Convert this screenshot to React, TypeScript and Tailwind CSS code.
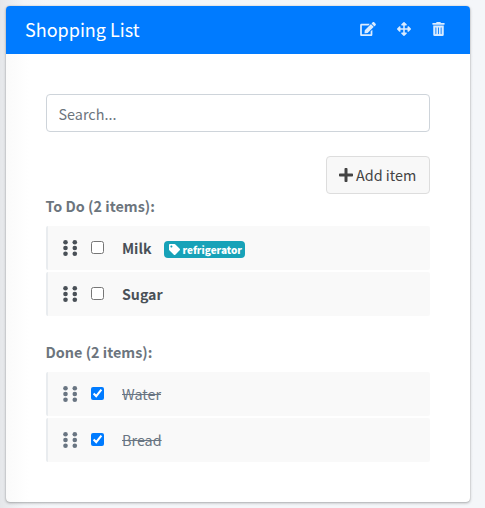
import { FaArrowsAlt, FaEdit, FaPlus, FaTag, FaTrashAlt } from "react-icons/fa";

type Item = { name: string; done?: boolean; tag?: string };

const todo: Item[] = [{ name: "Milk", tag: "refrigerator" }, { name: "Sugar" }];
const done: Item[] = [
  { name: "Water", done: true },
  { name: "Bread", done: true },
];

function DragHandle() {
  return (
    <svg viewBox="0 0 15 16" className="h-4 w-[15px] shrink-0" fill="currentColor">
      {[2.3, 8, 13.7].map((y) => (
        <g key={y}>
          <circle cx="2.5" cy={y} r="2.3" />
          <circle cx="11.8" cy={y} r="2.3" />
        </g>
      ))}
    </svg>
  );
}

function Row({ item }: { item: Item }) {
  return (
    <li
      className={`flex h-11 items-center rounded-[2px] border-l-2 border-[#e9ecef] bg-[#f9f9f9] pl-[15px] ${
        item.done ? "text-[#697582]" : "text-[#495057]"
      }`}
    >
      <DragHandle />
      <input
        type="checkbox"
        defaultChecked={item.done}
        className="mb-[2px] ml-[13px] h-[13px] w-[13px] shrink-0 accent-[#007bff]"
      />
      <span
        className={`ml-[18px] leading-6 ${
          item.done ? "text-[14.4px] font-normal line-through" : "text-[14.2px] font-bold"
        }`}
      >
        {item.name}
      </span>
      {item.tag && (
        <span className="ml-[13px] mt-[2px] flex h-[17px] w-[81px] items-center rounded bg-[#17a2b8] pl-[5px] text-[10px] font-black leading-none text-white">
          <FaTag className="mr-[2px] h-[11px] w-[11px] shrink-0" />
          <span className="mt-px">{item.tag}</span>
        </span>
      )}
    </li>
  );
}

function Section({ title, items }: { title: string; items: Item[] }) {
  return (
    <section>
      <h4 className="-ml-[0.5px] h-8 text-[14.4px] font-bold leading-[24px] text-[#6c757d]">{title}</h4>
      <ul className="flex flex-col gap-[2px]">
        {items.map((item) => (
          <Row key={item.name} item={item} />
        ))}
      </ul>
    </section>
  );
}

export default function App() {
  return (
    <div className="h-[508px] w-[485px] bg-[#f4f6f9] bg-linear-to-r from-[#e5e7ea] from-0% via-[#f2f4f7] via-5% to-[#f4f6f9] to-10% pl-[6px] pt-[6px] font-['Noto_Sans_CJK_SC',sans-serif]">
      <div className="h-[496px] w-[464px] overflow-hidden rounded bg-white bg-linear-to-r from-[#fafafa] to-white to-5% shadow-[0_0_1px_rgba(0,0,0,.3),0_1px_3px_rgba(0,0,0,.3)]">
        <header className="flex h-12 items-center bg-[#007bff] pb-[2px] pl-[19px] text-white">
          <h3 className="flex-1 text-[18px] leading-6">Shopping List</h3>
          <div className="flex items-center pr-[25px] text-[#d9ebff]">
            <FaEdit className="h-[14px] w-4" />
            <FaArrowsAlt className="ml-[21px] h-[14px] w-[14px]" />
            <FaTrashAlt className="ml-[21px] h-[14px] w-[13px]" />
          </div>
        </header>
        <div className="p-10">
          <input
            placeholder="Search..."
            className="block h-[38px] w-full rounded border border-[#ced4da] bg-white pl-[11.5px] pr-3 text-[14.4px] placeholder:text-[#6c757d]"
          />
          <div className="mt-6 flex justify-end">
            <button className="flex h-[38px] w-[104px] items-center whitespace-nowrap rounded border border-[#ddd] bg-[#f8f8f8] pl-3 text-[14.4px] text-[#444]">
              <FaPlus className="mr-[3px] h-4 w-[14px] shrink-0" />
              <span className="leading-5">Add item</span>
            </button>
          </div>
          <div className="flex flex-col gap-6">
            <Section title="To Do (2 items):" items={todo} />
            <Section title="Done (2 items):" items={done} />
          </div>
        </div>
      </div>
    </div>
  );
}
